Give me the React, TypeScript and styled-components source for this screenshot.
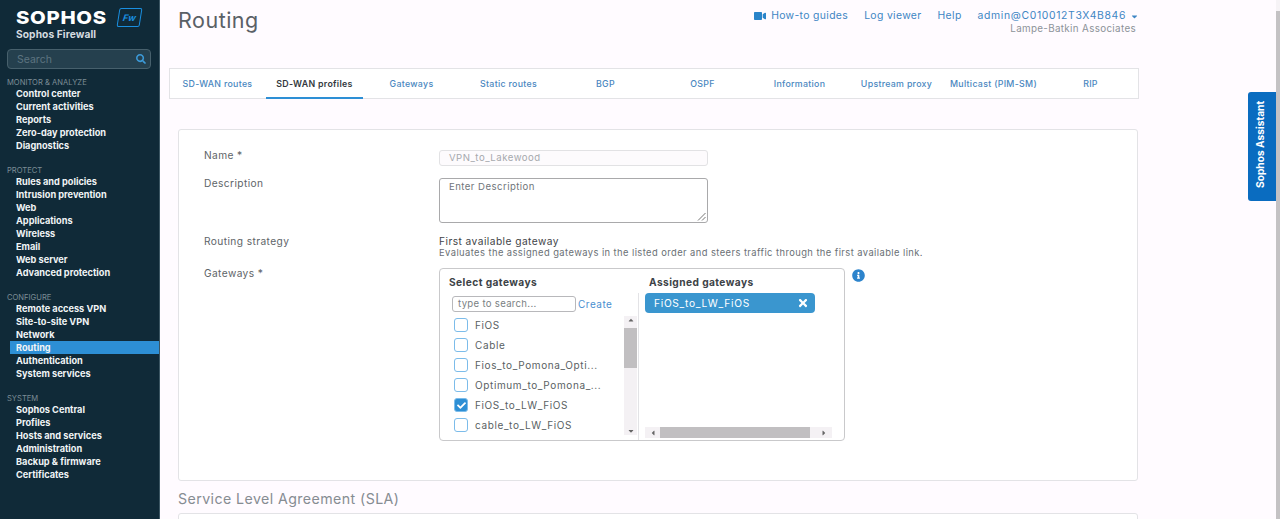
import * as React from 'react'
import styled, { createGlobalStyle } from 'styled-components'
import { FaCaretDown, FaCaretLeft, FaCaretRight, FaCaretUp, FaCheck, FaInfoCircle, FaSearch, FaTimes, FaVideo } from 'react-icons/fa'

const GlobalStyle = createGlobalStyle`
  html, body {
    margin: 0;
    height: 519px;
    overflow: hidden;
    background: #fffbff;
    font-family: Inter, "Open Sans", sans-serif;
  }
  * { box-sizing: border-box; }
`

const Page = styled.div`
  display: flex;
  width: 1280px;
  height: 519px;
  overflow: hidden;
  position: relative;
`

const Sidebar = styled.aside`
  width: 160px;
  flex: none;
  background: #102a38;
  padding: 10px 0 0 0;
  border-right: 1px solid #3c5663;
`

const Brand = styled.div`
  display: flex;
  flex-direction: column;
  padding-left: 16px;
  height: 39px;
`

const BrandTop = styled.div`
  display: flex;
  align-items: center;
  gap: 10px;
  height: 16px;
`

const BrandName = styled.div`
  color: #fff;
  font-size: 18px;
  line-height: 16px;
  font-weight: 800;
  letter-spacing: 0.6px;
  transform: scaleX(1.13);
  transform-origin: left center;
  width: 92px;
`

const FwBadge = styled.div`
  width: 23px;
  height: 19px;
  flex: none;
  margin-top: -1px;
  border: 1.5px solid #1a8fe0;
  border-radius: 2px;
  transform: skewX(-9deg);
  display: flex;
  align-items: center;
  justify-content: center;
  color: #1a8fe0;
  font-size: 9px;
  font-weight: 700;
  font-style: italic;
`

const BrandSub = styled.div`
  color: #d5dce0;
  font-size: 10.2px;
  font-weight: 700;
  letter-spacing: 0.1px;
  margin-top: 2px;
  line-height: 12px;
`

const SearchBox = styled.div`
  margin: 0 0 0 7px;
  width: 144px;
  height: 20px;
  border: 1px solid #47606c;
  border-radius: 4px;
  background: #25404e;
  display: flex;
  align-items: center;
  justify-content: space-between;
  padding: 0 4px 0 9px;
  color: #5d7480;
  font-size: 10.5px;
  svg { color: #3c9ad8; font-size: 10px; }
`

const NavGroup = styled.nav<{ $gap: number }>`
  margin-top: ${({ $gap }) => $gap}px;
`

const NavTitle = styled.div`
  color: #7c8d96;
  font-size: 7.6px;
  line-height: 9px;
  padding-left: 7px;
`

const NavItem = styled.div<{ $active?: boolean }>`
  height: 13px;
  line-height: 13px;
  margin-left: 10px;
  padding-left: 6px;
  font-size: 9.2px;
  font-weight: 700;
  color: #f1f4f6;
  background: ${({ $active }) => ($active ? '#2d8fd5' : 'transparent')};
`

const Main = styled.main`
  flex: 1;
  padding-left: 9px;
  display: flex;
  flex-direction: column;
  min-width: 0;
  > * { flex: none; }
`

const Header = styled.header`
  width: 970px;
  height: 68px;
  display: flex;
  justify-content: space-between;
  padding-left: 9px;
`

const Title = styled.h1`
  margin: 7px 0 0;
  font-size: 21.5px;
  line-height: 26px;
  font-weight: 400;
  color: #5a6066;
  letter-spacing: 0.5px;
`

const HeaderRight = styled.div`
  padding: 10px 0 0;
  text-align: right;
`

const Links = styled.div`
  display: flex;
  gap: 16px;
  align-items: center;
  justify-content: flex-end;
  font-size: 10.4px;
  line-height: 12px;
  letter-spacing: 0.35px;
  color: #3e86c4;
`

const VideoLink = styled.span`
  display: flex;
  align-items: center;
  gap: 5px;
  svg { font-size: 12px; color: #2a84c9; }
`

const Account = styled.span`
  display: flex;
  align-items: center;
  gap: 4px;
  letter-spacing: 0.65px;
  svg { font-size: 9px; }
`

const Org = styled.div`
  font-size: 9.8px;
  line-height: 14px;
  letter-spacing: 0.35px;
  color: #8c9298;
  padding-right: 3px;
`

const Tabs = styled.div`
  width: 970px;
  height: 31px;
  display: flex;
  background: #fff;
  border: 1px solid #e3e3e6;
  > :first-child { margin-left: -1px; }
`

const Tab = styled.div<{ $active?: boolean }>`
  width: 97px;
  flex: none;
  display: flex;
  align-items: center;
  justify-content: center;
  font-size: 8.8px;
  letter-spacing: 0.3px;
  font-weight: ${({ $active }) => ($active ? 600 : 500)};
  color: ${({ $active }) => ($active ? '#33393e' : '#4a87c0')};
  border-bottom: 2px solid ${({ $active }) => ($active ? '#2d8fd5' : 'transparent')};
  margin-bottom: -1px;
  padding-top: 1px;
  white-space: nowrap;
`

const Card = styled.section`
  margin: 30px 0 0 9px;
  width: 960px;
  height: 352px;
  background: #fff;
  border: 1px solid #e3e3e6;
  border-radius: 3px;
  padding: 20px 0 0 25px;
  display: grid;
  grid-template-columns: 235px 1fr;
  grid-template-rows: 16px 45px 21px 1fr;
  row-gap: 12px;
`

const Label = styled.div<{ $top?: number }>`
  font-size: 10.2px;
  line-height: 10px;
  letter-spacing: 0.4px;
  color: #5e6468;
  padding-top: ${({ $top }) => $top ?? 0}px;
`

const NameInput = styled.div`
  width: 269px;
  height: 16px;
  border: 1px solid #e2e2e4;
  border-radius: 3px;
  background: #fdfbfd;
  color: #a6a9ad;
  font-size: 9.6px;
  letter-spacing: 0.5px;
  line-height: 14px;
  padding-left: 9px;
`

const DescInput = styled.div`
  width: 269px;
  height: 45px;
  border: 1px solid #a9a9ab;
  border-radius: 3px;
  color: #70757a;
  font-size: 9.6px;
  letter-spacing: 0.45px;
  line-height: 14px;
  padding: 1px 0 0 9px;
  position: relative;
`

const Grip = styled.svg`
  position: absolute;
  right: 1px;
  bottom: 1px;
`

const StrategyTitle = styled.div`
  font-size: 10.2px;
  letter-spacing: 0.45px;
  line-height: 12px;
  color: #3f4448;
`

const StrategyText = styled.div`
  font-size: 9.4px;
  letter-spacing: 0.42px;
  line-height: 11px;
  color: #6a7075;
`

const Gateways = styled.div`
  display: flex;
  align-items: flex-start;
  gap: 7px;
`

const GatewayBox = styled.div`
  width: 406px;
  height: 173px;
  border: 1px solid #c9c9cb;
  border-radius: 4px;
  display: flex;
`

const Pane = styled.div`
  width: 199px;
  flex: none;
  padding: 7px 0 0 0;
`

const RightPane = styled.div`
  flex: 1;
  padding: 7px 0 0 10px;
  display: flex;
  flex-direction: column;
`

const PaneTitle = styled.div<{ $indent?: number }>`
  font-size: 10.2px;
  font-weight: 700;
  letter-spacing: 0.42px;
  line-height: 13px;
  color: #3d4347;
  padding-left: ${({ $indent }) => $indent ?? 0}px;
`

const PaneBody = styled.div`
  margin-top: 4px;
  height: 147px;
  padding: 3px 0 0 12px;
  border-right: 1px solid #e3e3e6;
`

const SearchRow = styled.div`
  display: flex;
  align-items: center;
  gap: 2px;
`

const SearchField = styled.div`
  width: 124px;
  height: 16px;
  border: 1px solid #b8b8bb;
  border-radius: 3px;
  color: #7a7f83;
  font-size: 9.6px;
  letter-spacing: 0.3px;
  line-height: 14px;
  padding-left: 5px;
`

const CreateLink = styled.span`
  color: #4a8fd0;
  font-size: 10px;
  letter-spacing: 0.5px;
`

const ListWrap = styled.div`
  display: flex;
  margin-top: 3px;
  height: 120px;
  justify-content: space-between;
`

const List = styled.div`
  padding: 0 0 0 2px;
`

const Row = styled.div`
  height: 20px;
  display: flex;
  align-items: center;
  gap: 7px;
  font-size: 10px;
  letter-spacing: 0.62px;
  color: #5a5f63;
  white-space: nowrap;
`

const Check = styled.span<{ $on?: boolean }>`
  width: 14px;
  height: 14px;
  flex: none;
  border: 1px solid #7cbcea;
  border-radius: 3px;
  background: ${({ $on }) => ($on ? '#2d8fd5' : '#fff')};
  color: #fff;
  display: flex;
  align-items: center;
  justify-content: center;
  font-size: 9px;
`

const VScroll = styled.div`
  width: 13px;
  height: 119px;
  margin: 1px 1px 0 0;
  background: #f4f1f4;
  display: flex;
  flex-direction: column;
  align-items: center;
  justify-content: space-between;
  color: #666;
  font-size: 8px;
`

const VThumb = styled.div`
  width: 13px;
  height: 40px;
  margin-top: 4px;
  margin-bottom: auto;
  background: #c1bfc1;
`

const Tag = styled.div`
  margin-top: 4px;
  margin-left: -4px;
  width: 170px;
  height: 20px;
  background: #3a96cf;
  border-radius: 4px;
  color: #fff;
  font-size: 10.2px;
  letter-spacing: 0.7px;
  display: flex;
  align-items: center;
  justify-content: space-between;
  padding: 0 6px 0 9px;
  svg { font-size: 12px; }
`

const HScroll = styled.div`
  margin: auto 0 2px -4px;
  width: 187px;
  height: 11px;
  background: #f4f1f4;
  display: flex;
  align-items: center;
  color: #666;
  font-size: 8px;
  padding: 0 4px;
`

const HThumb = styled.div`
  flex: 1;
  height: 11px;
  margin: 0 10px 0 3px;
  background: #c1bfc1;
`

const InfoIcon = styled.span`
  color: #2d84cc;
  font-size: 13px;
  line-height: 13px;
  margin-top: 1px;
`

const SlaTitle = styled.h2`
  margin: 9px 0 0 9px;
  font-size: 14.2px;
  line-height: 18px;
  font-weight: 400;
  color: #868c92;
  letter-spacing: 0.42px;
`

const SlaCard = styled.div`
  margin: 5px 0 0 9px;
  width: 960px;
  height: 40px;
  background: #fff;
  border: 1px solid #e3e3e6;
  border-radius: 3px;
`

const Assistant = styled.div`
  position: absolute;
  top: 92px;
  right: 4px;
  width: 28px;
  height: 109px;
  background: #0a6cc0;
  border-radius: 0 3px 3px 0;
  color: #fff;
  font-size: 10.2px;
  font-weight: 700;
  writing-mode: vertical-rl;
  transform: rotate(180deg);
  display: flex;
  align-items: center;
  justify-content: center;
  padding: 4px 0 0 5px;
  white-space: nowrap;
`

const PageScroll = styled.div`
  position: absolute;
  top: 0;
  right: 0;
  width: 4px;
  height: 519px;
  padding-top: 11px;
  background: #f6f3f6;
`

const PageThumb = styled.div`
  height: 100%;
  background: #c4c2c4;
`

const nav = [
  { title: 'MONITOR & ANALYZE', gap: 9, items: ['Control center', 'Current activities', 'Reports', 'Zero-day protection', 'Diagnostics'] },
  { title: 'PROTECT', gap: 14, items: ['Rules and policies', 'Intrusion prevention', 'Web', 'Applications', 'Wireless', 'Email', 'Web server', 'Advanced protection'] },
  { title: 'CONFIGURE', gap: 14, items: ['Remote access VPN', 'Site-to-site VPN', 'Network', 'Routing', 'Authentication', 'System services'] },
  { title: 'SYSTEM', gap: 14, items: ['Sophos Central', 'Profiles', 'Hosts and services', 'Administration', 'Backup & firmware', 'Certificates'] },
]

const tabs = ['SD-WAN routes', 'SD-WAN profiles', 'Gateways', 'Static routes', 'BGP', 'OSPF', 'Information', 'Upstream proxy', 'Multicast (PIM-SM)', 'RIP']

const gateways = ['FiOS', 'Cable', 'Fios_to_Pomona_Opti...', 'Optimum_to_Pomona_...', 'FiOS_to_LW_FiOS', 'cable_to_LW_FiOS']

const App: React.FC = () => (
  <Page>
    <GlobalStyle />
    <Sidebar>
      <Brand>
        <BrandTop>
          <BrandName>SOPHOS</BrandName>
          <FwBadge>Fw</FwBadge>
        </BrandTop>
        <BrandSub>Sophos Firewall</BrandSub>
      </Brand>
      <SearchBox>
        Search
        <FaSearch />
      </SearchBox>
      {nav.map((group) => (
        <NavGroup key={group.title} $gap={group.gap}>
          <NavTitle>{group.title}</NavTitle>
          {group.items.map((item) => (
            <NavItem key={item} $active={item === 'Routing'}>{item}</NavItem>
          ))}
        </NavGroup>
      ))}
    </Sidebar>

    <Main>
      <Header>
        <Title>Routing</Title>
        <HeaderRight>
          <Links>
            <VideoLink><FaVideo /> How-to guides</VideoLink>
            <span>Log viewer</span>
            <span>Help</span>
            <Account>admin@C010012T3X4B846 <FaCaretDown /></Account>
          </Links>
          <Org>Lampe-Batkin Associates</Org>
        </HeaderRight>
      </Header>

      <Tabs>
        {tabs.map((tab) => (
          <Tab key={tab} $active={tab === 'SD-WAN profiles'}>{tab}</Tab>
        ))}
      </Tabs>

      <Card>
        <Label>Name *</Label>
        <NameInput>VPN_to_Lakewood</NameInput>

        <Label>Description</Label>
        <DescInput>
          Enter Description
          <Grip width="9" height="9" viewBox="0 0 9 9">
            <path d="M8.5 1 1 8.5M8.5 5 5 8.5" stroke="#777" strokeWidth="1" fill="none" />
          </Grip>
        </DescInput>

        <Label $top={1}>Routing strategy</Label>
        <div>
          <StrategyTitle>First available gateway</StrategyTitle>
          <StrategyText>Evaluates the assigned gateways in the listed order and steers traffic through the first available link.</StrategyText>
        </div>

        <Label>Gateways *</Label>
        <Gateways>
          <GatewayBox>
            <Pane>
              <PaneTitle $indent={9}>Select gateways</PaneTitle>
              <PaneBody>
                <SearchRow>
                  <SearchField>type to search...</SearchField>
                  <CreateLink>Create</CreateLink>
                </SearchRow>
                <ListWrap>
                  <List>
                    {gateways.map((gateway) => (
                      <Row key={gateway}>
                        <Check $on={gateway === 'FiOS_to_LW_FiOS'}>
                          {gateway === 'FiOS_to_LW_FiOS' && <FaCheck />}
                        </Check>
                        {gateway}
                      </Row>
                    ))}
                  </List>
                  <VScroll>
                    <FaCaretUp />
                    <VThumb />
                    <FaCaretDown />
                  </VScroll>
                </ListWrap>
              </PaneBody>
            </Pane>
            <RightPane>
              <PaneTitle>Assigned gateways</PaneTitle>
              <Tag>FiOS_to_LW_FiOS <FaTimes /></Tag>
              <HScroll>
                <FaCaretLeft />
                <HThumb />
                <FaCaretRight />
              </HScroll>
            </RightPane>
          </GatewayBox>
          <InfoIcon><FaInfoCircle /></InfoIcon>
        </Gateways>
      </Card>

      <SlaTitle>Service Level Agreement (SLA)</SlaTitle>
      <SlaCard />
    </Main>

    <Assistant>Sophos Assistant</Assistant>
    <PageScroll><PageThumb /></PageScroll>
  </Page>
)

export default App
